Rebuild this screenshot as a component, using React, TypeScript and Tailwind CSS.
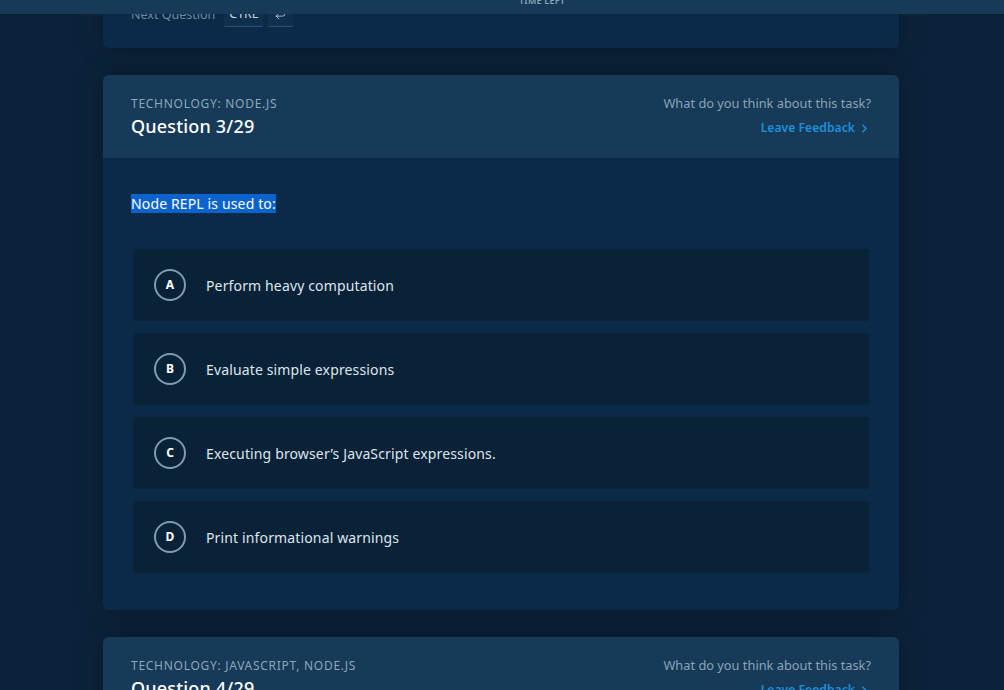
import { ChevronRight, CornerDownLeft } from "lucide-react";

const font = { fontFamily: '"Noto Sans", "Open Sans", sans-serif' };

type Option = { key: string; text: string };

const options: Option[] = [
  { key: "A", text: "Perform heavy computation" },
  { key: "B", text: "Evaluate simple expressions" },
  { key: "C", text: "Executing browser’s JavaScript expressions." },
  { key: "D", text: "Print informational warnings" },
];

function QuestionHeader({ tech, title }: { tech: string; title: string }) {
  return (
    <div className="flex justify-between bg-[#163a58] pl-7 pr-7 pt-5 pb-[18px] rounded-t-md">
      <div>
        <div className="text-[12px] leading-[18px] tracking-[0.06em] uppercase text-[#8ba6bc]">{tech}</div>
        <div className="text-[18px] leading-[28px] font-medium tracking-[0.01em] text-white mt-[-1px]">{title}</div>
      </div>
      <div className="flex flex-col items-end">
        <div className="text-[12.8px] leading-[16px] text-[#8ba3b6]">What do you think about this task?</div>
        <a className="flex items-center gap-[3px] mt-[8px] text-[12.2px] leading-[18px] font-semibold text-[#1d8fdc]">
          Leave Feedback
          <ChevronRight className="w-[13px] h-[13px]" strokeWidth={2.5} />
        </a>
      </div>
    </div>
  );
}

function OptionRow({ o }: { o: Option }) {
  return (
    <div className="flex items-center h-[72px] pl-[21px] rounded-[3px] bg-[#0a2238]">
      <div className="w-8 h-8 rounded-full border-2 border-[#7f9bb0] flex items-center justify-center text-[12px] font-bold text-white">
        {o.key}
      </div>
      <div className="ml-5 text-[14px] tracking-[0.01em] text-[#dde5ec]">{o.text}</div>
    </div>
  );
}

export default function App() {
  return (
    <div className="min-h-screen bg-[#0b233a] overflow-hidden" style={font}>
      {/* top bar with timer */}
      <div className="fixed top-0 left-0 right-0 h-[14px] bg-[#163a58] z-10 overflow-hidden">
        <div className="absolute left-[519px] top-[-6px] text-[9px] leading-[14px] font-semibold tracking-wide text-[#8ba6bc]">
          TIME LEFT
        </div>
      </div>

      <div className="w-[796px] ml-[103px] flex flex-col gap-[27px]">
        {/* previous card, scrolled mostly out of view */}
        <div className="bg-[#0a2a48] rounded-b-md pt-[3px] pb-[21px] px-7 shadow-[0_0_28px_rgba(0,0,0,0.3)]">
          <div className="flex items-center h-6 gap-[9px]">
            <span className="text-[12.5px] text-[#6f8aa0]">Next Question</span>
            <span className="h-6 px-[5px] flex items-center text-[12.5px] text-[#c9d5df] bg-[#0e2f4d] border-b border-[#2f5270] rounded-[2px]">CTRL</span>
            <span className="h-6 w-[25px] flex items-center justify-center text-[#c9d5df] bg-[#0e2f4d] border-b border-[#2f5270] rounded-[2px] ml-[-4px]">
              <CornerDownLeft className="w-[13px] h-[13px]" strokeWidth={1.5} />
            </span>
          </div>
        </div>

        <div className="bg-[#0a2a48] rounded-md shadow-[0_0_28px_rgba(0,0,0,0.3)]">
          <QuestionHeader tech="Technology: Node.js" title="Question 3/29" />
          <div className="pt-[35px] pb-[37px]">
            <div className="px-7 text-[14px] leading-[22px] tracking-[0.01em] text-white">
              <span className="bg-[#0b63ce]">Node REPL is used to:</span>
            </div>
            <div className="mt-[34px] px-[30px] flex flex-col gap-3">
              {options.map((o) => (
                <OptionRow key={o.key} o={o} />
              ))}
            </div>
          </div>
        </div>

        <div className="bg-[#0a2a48] rounded-md shadow-[0_0_28px_rgba(0,0,0,0.3)]">
          <QuestionHeader tech="Technology: JavaScript, Node.js" title="Question 4/29" />
          <div className="h-40" />
        </div>
      </div>
    </div>
  );
}
